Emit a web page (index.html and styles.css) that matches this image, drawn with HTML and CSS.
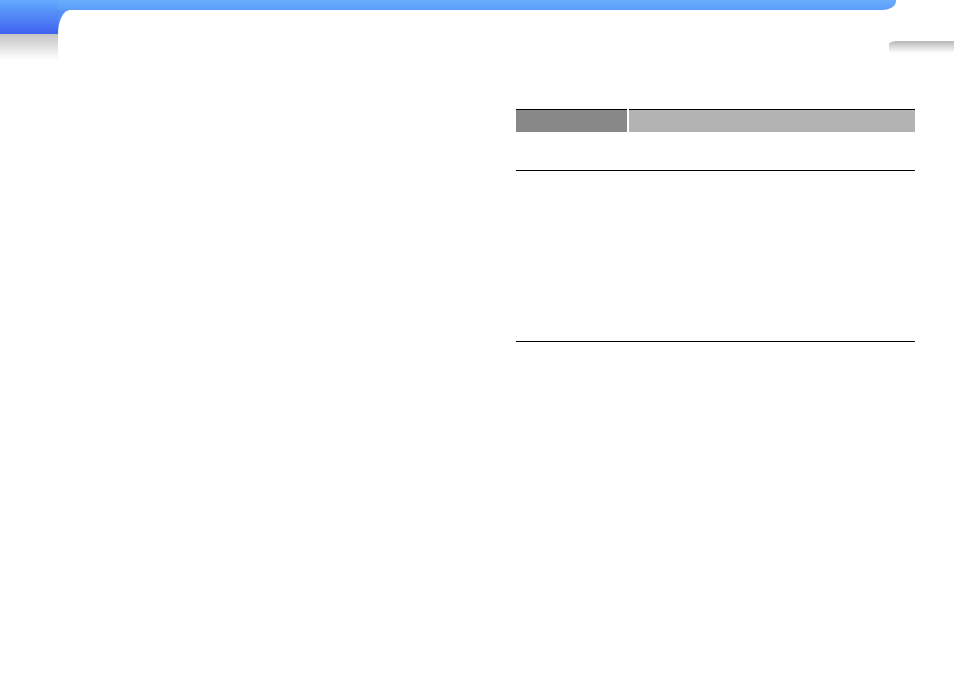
FILE: index.html
```html
<!DOCTYPE html>
<html lang="en">
<head>
  <meta charset="UTF-8">
  <title>Page</title>
  <link rel="stylesheet" href="styles.css">
</head>
<body>
  <div class="header">
    <div class="tab"></div>
    <div class="strip">
      <div class="bar"></div>
      <div class="sheet">
        <div class="shelf"></div>
      </div>
    </div>
  </div>

  <div class="content">
    <div class="col-left"></div>
    <div class="col-right">
      <table class="spec">
        <tr class="head">
          <th class="key"></th>
          <th class="val"></th>
        </tr>
        <tr class="row-a">
          <td></td>
          <td></td>
        </tr>
        <tr class="row-b">
          <td></td>
          <td></td>
        </tr>
      </table>
    </div>
  </div>
</body>
</html>
```

FILE: styles.css
```css
body {
  margin: 0;
  padding: 0;
  background: #fff;
  font-family: "Liberation Sans", Arial, sans-serif;
}

.header {
  display: flex;
  height: 60px;
}
.tab {
  width: 58px;
  background: linear-gradient(#66aaff 0, #5590f8 12px, #4162ef 34px, #c4c4c4 34px, #fff 60px);
}
.strip {
  flex: 1;
  display: flex;
  flex-direction: column;
  background: linear-gradient(#66aaff 0, #5590f8 12px, #4a76f3 34px) no-repeat 0 0 / 16px 34px;
}
.bar {
  height: 10px;
  margin-right: 58px;
  background: linear-gradient(#6aaeff, #5c9cf8);
  border-bottom-right-radius: 13px 9px;
}
.sheet {
  flex: 1;
  display: flex;
  justify-content: flex-end;
  background: #fff;
  border-top-left-radius: 12px 24px;
}
.shelf {
  width: 65px;
  height: 12px;
  margin-top: 31px;
  background: linear-gradient(#b8b8b8, #fff);
  border-top-left-radius: 8px 3px;
}

.content {
  display: flex;
  padding-top: 49px;
}
.col-left {
  width: 516px;
}
.col-right {
  width: 399px;
}
.spec {
  width: 399px;
  border-collapse: collapse;
  border-top: 1px solid #000;
}
.spec th, .spec td {
  padding: 0;
}
.head th {
  height: 22px;
}
.head .key {
  width: 111px;
  background: #888;
  border-right: 2px solid #fff;
}
.head .val {
  background: #b3b3b3;
}
.row-a td {
  height: 38px;
  border-bottom: 1px solid #000;
}
.row-b td {
  height: 170px;
  border-bottom: 1px solid #000;
}
```
